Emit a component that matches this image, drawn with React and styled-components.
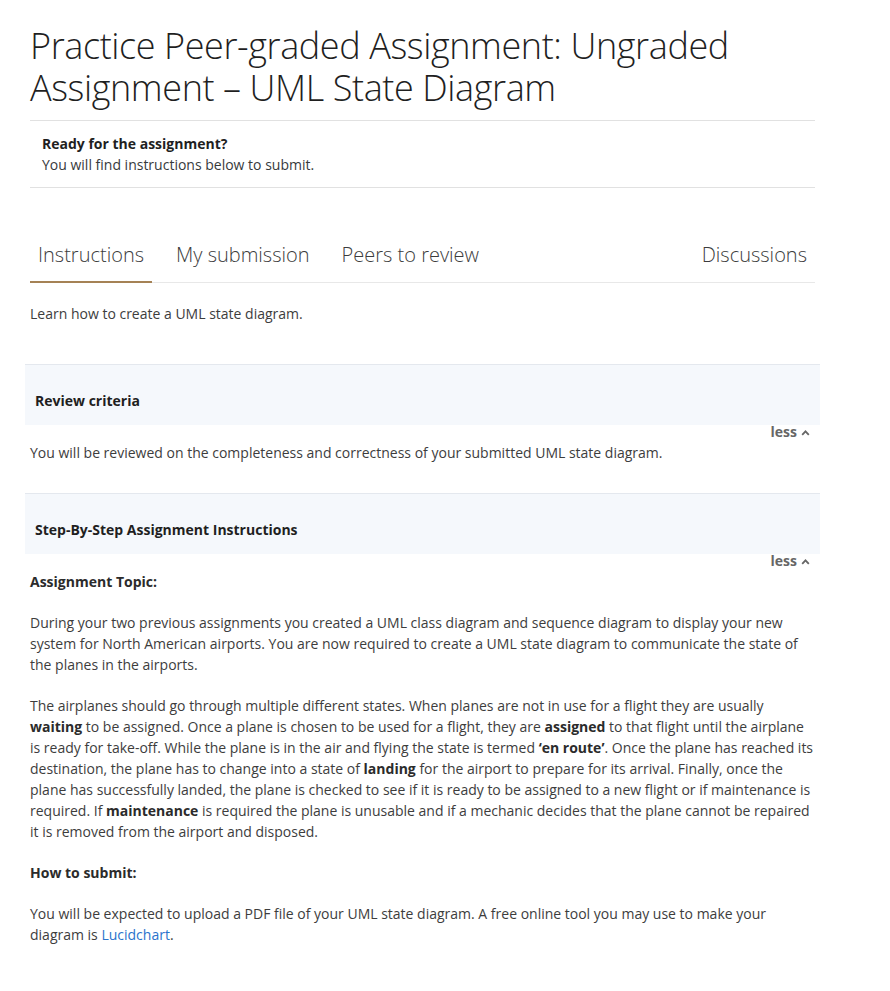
import React from "react";
import styled, { createGlobalStyle } from "styled-components";

const Global = createGlobalStyle`
  html, body { margin: 0; padding: 0; background: #fff; }
  body { font-family: "Open Sans", "Noto Sans", sans-serif; color: #373a3c; }
`;

const Page = styled.div`
  width: 785px;
  padding: 25px 0 40px 30px;
`;

const Title = styled.h1`
  margin: 0 0 11px;
  font-size: 36px;
  line-height: 42px;
  font-weight: 300;
  letter-spacing: -0.4px;
  color: #1f1f1f;
`;

const ReadyBox = styled.div`
  border-top: 1px solid #e1e1e1;
  border-bottom: 1px solid #e1e1e1;
  padding: 12px 12px 12px;
  font-size: 14px;
  line-height: 21px;
`;

const Strong = styled.div`
  font-weight: 700;
  color: #1f1f1f;
`;

const Tabs = styled.nav`
  display: flex;
  margin-top: 53px;
  border-bottom: 1px solid #e8e8e8;
`;

const Tab = styled.div`
  padding: 0 8px 12px;
  margin-right: ${(p) => (p.$last ? "0" : "16px")};
  margin-left: ${(p) => (p.$push ? "auto" : "0")};
  font-size: 20px;
  line-height: 28px;
  font-weight: 300;
  color: #3c3c3c;
  border-bottom: 2px solid ${(p) => (p.$active ? "#a58255" : "transparent")};
  margin-bottom: -1px;
`;

const Text = styled.p`
  margin: ${(p) => p.$m || "0"};
  font-size: 14px;
  line-height: 21px;
  color: #3d3d3d;
`;

const PanelHead = styled.div`
  margin: ${(p) => p.$mt || "0"} -5px 0;
  background: #f5f8fc;
  border-top: 1px solid #e4e8ee;
  padding: 25px 10px 14px;
  font-size: 14px;
  line-height: 21px;
  font-weight: 700;
  color: #1f1f1f;
`;

const LessRow = styled.div`
  display: flex;
  justify-content: flex-end;
  align-items: center;
  gap: 4px;
  padding-right: 5px;
  font-size: 14px;
  line-height: 14px;
  font-weight: 700;
  color: #666;
`;

const B = styled.strong`
  font-weight: 700;
  color: #2b2b2b;
`;

const Link = styled.a`
  color: #2a73cc;
  text-decoration: none;
`;

const Chevron = () => (
  <svg width="9" height="7" viewBox="0 0 9 7" aria-hidden="true">
    <path d="M1.2 5.8 L4.5 2.3 L7.8 5.8" fill="none" stroke="#666" strokeWidth="1.8" />
  </svg>
);

export default function App() {
  return (
    <>
      <Global />
      <Page>
        <Title>Practice Peer-graded Assignment: Ungraded Assignment – UML State Diagram</Title>
        <ReadyBox>
          <Strong>Ready for the assignment?</Strong>
          <div>You will find instructions below to submit.</div>
        </ReadyBox>
        <Tabs>
          <Tab $active>Instructions</Tab>
          <Tab>My submission</Tab>
          <Tab>Peers to review</Tab>
          <Tab $push $last>Discussions</Tab>
        </Tabs>
        <Text $m="20px 0 0">Learn how to create a UML state diagram.</Text>

        <PanelHead $mt="40px">Review criteria</PanelHead>
        <LessRow>less <Chevron /></LessRow>
        <Text $m="3px 0 0">
          You will be reviewed on the completeness and correctness of your submitted UML state diagram.
        </Text>

        <PanelHead $mt="30px">Step-By-Step Assignment Instructions</PanelHead>
        <LessRow>less <Chevron /></LessRow>
        <Text $m="3px 0 0"><B>Assignment Topic:</B></Text>
        <Text $m="20px 0 0">
          During your two previous assignments you created a UML class diagram and sequence diagram to display your new
          system for North American airports. You are now required to create a UML state diagram to communicate the state of
          the planes in the airports.
        </Text>
        <Text $m="20px 0 0">
          The airplanes should go through multiple different states. When planes are not in use for a flight they are usually{" "}
          <B>waiting</B> to be assigned. Once a plane is chosen to be used for a flight, they are <B>assigned</B> to that flight until the airplane
          is ready for take-off. While the plane is in the air and flying the state is termed <B>‘en route’</B>. Once the plane has reached its
          destination, the plane has to change into a state of <B>landing</B> for the airport to prepare for its arrival. Finally, once the
          plane has successfully landed, the plane is checked to see if it is ready to be assigned to a new flight or if maintenance is
          required. If <B>maintenance</B> is required the plane is unusable and if a mechanic decides that the plane cannot be repaired
          it is removed from the airport and disposed.
        </Text>
        <Text $m="20px 0 0"><B>How to submit:</B></Text>
        <Text $m="20px 0 0">
          You will be expected to upload a PDF file of your UML state diagram. A free online tool you may use to make your
          diagram is <Link href="#">Lucidchart</Link>.
        </Text>
      </Page>
    </>
  );
}
